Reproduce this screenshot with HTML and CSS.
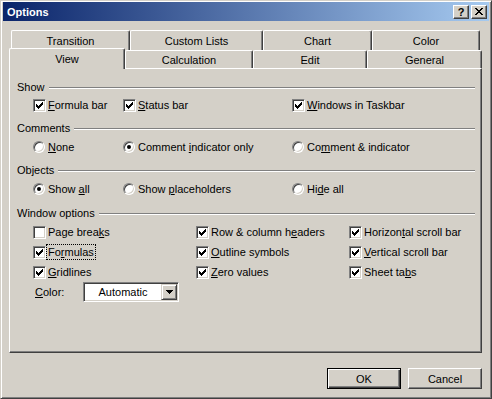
FILE: index.html
```html
<!DOCTYPE html>
<html lang="en">
<head>
    <meta charset="UTF-8">
    <title>Options</title>
    <link rel="stylesheet" href="styles.css">
</head>
<body>
    <div class="window">
        <div class="titlebar">
            <span class="title">Options</span>
            <div class="caption-btns">
                <span class="cap-btn">?</span>
                <span class="cap-btn">
                    <svg width="8" height="7" viewBox="0 0 8 7"><path d="M0 0h2v1H0zM6 0h2v1H6zM1 1h2v1H1zM5 1h2v1H5zM2 2h4v1H2zM3 3h2v1H3zM2 4h4v1H2zM1 5h2v1H1zM5 5h2v1H5zM0 6h2v1H0zM6 6h2v1H6z" fill="#000"/></svg>
                </span>
            </div>
        </div>

        <div class="client">
            <div class="tabs">
                <div class="tab-row back">
                    <div class="tab" style="width:119px">Transition</div>
                    <div class="tab" style="width:133px">Custom Lists</div>
                    <div class="tab" style="width:109px">Chart</div>
                    <div class="tab" style="width:108px">Color</div>
                </div>
                <div class="tab-row front">
                    <div class="tab active" style="width:116px">View</div>
                    <div class="tab" style="width:128px">Calculation</div>
                    <div class="tab" style="width:114px">Edit</div>
                    <div class="tab" style="width:115px">General</div>
                </div>
            </div>

            <div class="panel">
                <!-- Show -->
                <div class="group">
                    <div class="group-title">Show</div>
                    <div class="opts three first">
                        <div class="opt"><span class="check on"><svg viewBox="1 1 11 11"><path d="M3 5h1v3H3zM4 6h1v3H4zM5 7h1v3H5zM6 6h1v3H6zM7 5h1v3H7zM8 4h1v3H8zM9 3h1v3H9z"/></svg></span><span><u>F</u>ormula bar</span></div>
                        <div class="opt"><span class="check on"><svg viewBox="1 1 11 11"><path d="M3 5h1v3H3zM4 6h1v3H4zM5 7h1v3H5zM6 6h1v3H6zM7 5h1v3H7zM8 4h1v3H8zM9 3h1v3H9z"/></svg></span><span><u>S</u>tatus bar</span></div>
                        <div class="opt"><span class="check on"><svg viewBox="1 1 11 11"><path d="M3 5h1v3H3zM4 6h1v3H4zM5 7h1v3H5zM6 6h1v3H6zM7 5h1v3H7zM8 4h1v3H8zM9 3h1v3H9z"/></svg></span><span><u>W</u>indows in Taskbar</span></div>
                    </div>
                </div>

                <!-- Comments -->
                <div class="group">
                    <div class="group-title">Comments</div>
                    <div class="opts three">
                        <div class="opt"><span class="radio"></span><span><u>N</u>one</span></div>
                        <div class="opt"><span class="radio on"></span><span>Comment <u>i</u>ndicator only</span></div>
                        <div class="opt"><span class="radio"></span><span>Co<u>m</u>ment &amp; indicator</span></div>
                    </div>
                </div>

                <!-- Objects -->
                <div class="group">
                    <div class="group-title">Objects</div>
                    <div class="opts three">
                        <div class="opt"><span class="radio on"></span><span>Show <u>a</u>ll</span></div>
                        <div class="opt"><span class="radio"></span><span>Show <u>p</u>laceholders</span></div>
                        <div class="opt"><span class="radio"></span><span>Hi<u>d</u>e all</span></div>
                    </div>
                </div>

                <!-- Window options -->
                <div class="group last">
                    <div class="group-title">Window options</div>
                    <div class="opts win-opts">
                        <div class="opt"><span class="check"></span><span>Page brea<u>k</u>s</span></div>
                        <div class="opt"><span class="check on"><svg viewBox="1 1 11 11"><path d="M3 5h1v3H3zM4 6h1v3H4zM5 7h1v3H5zM6 6h1v3H6zM7 5h1v3H7zM8 4h1v3H8zM9 3h1v3H9z"/></svg></span><span>Row &amp; column h<u>e</u>aders</span></div>
                        <div class="opt"><span class="check on"><svg viewBox="1 1 11 11"><path d="M3 5h1v3H3zM4 6h1v3H4zM5 7h1v3H5zM6 6h1v3H6zM7 5h1v3H7zM8 4h1v3H8zM9 3h1v3H9z"/></svg></span><span>Horizon<u>t</u>al scroll bar</span></div>

                        <div class="opt"><span class="check on"><svg viewBox="1 1 11 11"><path d="M3 5h1v3H3zM4 6h1v3H4zM5 7h1v3H5zM6 6h1v3H6zM7 5h1v3H7zM8 4h1v3H8zM9 3h1v3H9z"/></svg></span><span class="focus">Fo<u>r</u>mulas</span></div>
                        <div class="opt"><span class="check on"><svg viewBox="1 1 11 11"><path d="M3 5h1v3H3zM4 6h1v3H4zM5 7h1v3H5zM6 6h1v3H6zM7 5h1v3H7zM8 4h1v3H8zM9 3h1v3H9z"/></svg></span><span><u>O</u>utline symbols</span></div>
                        <div class="opt"><span class="check on"><svg viewBox="1 1 11 11"><path d="M3 5h1v3H3zM4 6h1v3H4zM5 7h1v3H5zM6 6h1v3H6zM7 5h1v3H7zM8 4h1v3H8zM9 3h1v3H9z"/></svg></span><span><u>V</u>ertical scroll bar</span></div>

                        <div class="opt"><span class="check on"><svg viewBox="1 1 11 11"><path d="M3 5h1v3H3zM4 6h1v3H4zM5 7h1v3H5zM6 6h1v3H6zM7 5h1v3H7zM8 4h1v3H8zM9 3h1v3H9z"/></svg></span><span><u>G</u>ridlines</span></div>
                        <div class="opt"><span class="check on"><svg viewBox="1 1 11 11"><path d="M3 5h1v3H3zM4 6h1v3H4zM5 7h1v3H5zM6 6h1v3H6zM7 5h1v3H7zM8 4h1v3H8zM9 3h1v3H9z"/></svg></span><span><u>Z</u>ero values</span></div>
                        <div class="opt"><span class="check on"><svg viewBox="1 1 11 11"><path d="M3 5h1v3H3zM4 6h1v3H4zM5 7h1v3H5zM6 6h1v3H6zM7 5h1v3H7zM8 4h1v3H8zM9 3h1v3H9z"/></svg></span><span>Sheet ta<u>b</u>s</span></div>
                    </div>
                    <div class="color-row">
                        <span class="color-label"><u>C</u>olor:</span>
                        <div class="combo">
                            <span class="combo-text">Automatic</span>
                            <span class="combo-arrow">
                                <svg width="7" height="4" viewBox="0 0 7 4"><path d="M0 0h7v1H0zM1 1h5v1H1zM2 2h3v1H2zM3 3h1v1H3z" fill="#000"/></svg>
                            </span>
                        </div>
                    </div>
                </div>
            </div>

            <div class="footer">
                <button class="btn default">OK</button>
                <button class="btn">Cancel</button>
            </div>
        </div>
    </div>
</body>
</html>
```

FILE: styles.css
```css
body {
    margin: 0;
    font-family: "Liberation Sans", Arial, sans-serif;
    font-size: 11px;
    color: #000;
    background-color: #d4d0c8;
}
.window {
    width: 492px;
    height: 399px;
    box-sizing: border-box;
    border: 1px solid;
    border-color: #d4d0c8 #404040 #404040 #d4d0c8;
    box-shadow: inset 1px 1px #fff, inset -1px -1px #808080;
    padding: 1px 2px 2px 2px;
    background-color: #d4d0c8;
    display: flex;
    flex-direction: column;
}
.titlebar {
    height: 19px;
    display: flex;
    align-items: center;
    justify-content: space-between;
    padding: 0 2px;
    background: linear-gradient(to right, #0a246a, #a6caf0);
}
.title {
    color: #fff;
    font-weight: bold;
    padding-left: 2px;
}
.caption-btns {
    display: flex;
    gap: 2px;
}
.cap-btn {
    width: 16px;
    height: 14px;
    box-sizing: border-box;
    background-color: #d4d0c8;
    border: 1px solid;
    border-color: #fff #404040 #404040 #fff;
    box-shadow: inset -1px -1px #808080;
    display: flex;
    align-items: center;
    justify-content: center;
    font-weight: bold;
    font-size: 11px;
    line-height: 12px;
}
.client {
    flex: 1;
    padding: 0 7px 0 6px;
    display: flex;
    flex-direction: column;
}
.tabs {
    margin-top: 9px;
}
.tab-row {
    display: flex;
    height: 20px;
}
.tab-row.back {
    padding-left: 2px;
}
.tab-row.front {
    margin-top: -2px;
    align-items: flex-end;
}
.tab {
    box-sizing: border-box;
    height: 20px;
    border: 1px solid;
    border-bottom: none;
    border-color: #fff #404040 #fff #fff;
    box-shadow: inset -1px 0 #808080;
    border-radius: 2px 2px 0 0;
    background-color: #d4d0c8;
    display: flex;
    align-items: center;
    justify-content: center;
}
.front .tab {
    height: 18px;
}
.front .tab.active {
    height: 21px;
    margin-bottom: -1px;
    position: relative;
    z-index: 1;
}
.panel {
    height: 285px;
    box-sizing: border-box;
    border: 1px solid;
    border-color: #fff #404040 #404040 #fff;
    box-shadow: inset -1px -1px #808080;
    padding: 11px 6px 0 7px;
}
.group {
    margin-top: 6px;
}
.group:first-child {
    margin-top: 0;
}
.group.last {
    margin-top: 7px;
}
.group-title {
    display: flex;
    align-items: center;
    height: 14px;
}
.group-title::after {
    content: "";
    flex: 1;
    border-top: 1px solid #808080;
    border-bottom: 1px solid #fff;
    margin: 2px 0 0 4px;
}
.opts {
    display: grid;
    grid-auto-rows: 20px;
    align-items: center;
    margin: 2px 0 0 16px;
}
.opts.first {
    margin-top: 1px;
}
.opts.three {
    grid-template-columns: 90px 169px 1fr;
}
.opts.win-opts {
    grid-template-columns: 163px 153px 1fr;
}
.opt {
    display: flex;
    align-items: center;
    white-space: nowrap;
}
.check {
    flex: none;
    width: 13px;
    height: 13px;
    box-sizing: border-box;
    border: 1px solid;
    border-color: #808080 #fff #fff #808080;
    box-shadow: inset 1px 1px #404040, inset -1px -1px #d4d0c8;
    background-color: #fff;
    margin-right: 2px;
    display: flex;
}
.check svg {
    width: 11px;
    height: 11px;
    fill: #000;
}
.radio {
    flex: none;
    width: 12px;
    height: 12px;
    box-sizing: border-box;
    border-radius: 50%;
    border: 1px solid;
    border-color: #808080 #fff #fff #808080;
    box-shadow: inset 1px 1px #404040, inset -1px -1px #d4d0c8;
    background-color: #fff;
    margin-right: 3px;
    display: flex;
    align-items: center;
    justify-content: center;
}
.radio.on::after {
    content: "";
    width: 4px;
    height: 4px;
    border-radius: 50%;
    background-color: #000;
}
.focus {
    outline: 1px dotted #000;
    padding: 1px;
    margin: -1px;
}
.color-row {
    display: flex;
    align-items: center;
    height: 20px;
    margin-left: 18px;
}
.color-label {
    width: 48px;
}
.combo {
    width: 96px;
    height: 20px;
    box-sizing: border-box;
    border: 1px solid;
    border-color: #808080 #fff #fff #808080;
    box-shadow: inset 1px 1px #404040, inset -1px -1px #d4d0c8;
    background-color: #fff;
    padding: 1px;
    display: flex;
}
.combo-text {
    flex: 1;
    text-align: center;
    line-height: 16px;
}
.combo-arrow {
    width: 16px;
    box-sizing: border-box;
    background-color: #d4d0c8;
    border: 1px solid;
    border-color: #d4d0c8 #404040 #404040 #d4d0c8;
    box-shadow: inset 1px 1px #fff, inset -1px -1px #808080;
    display: flex;
    align-items: center;
    justify-content: center;
}
.footer {
    display: flex;
    justify-content: flex-end;
    gap: 7px;
    margin-top: 15px;
}
.btn {
    width: 74px;
    height: 21px;
    box-sizing: border-box;
    font-family: "Liberation Sans", Arial, sans-serif;
    font-size: 11px;
    color: #000;
    background-color: #d4d0c8;
    border: 1px solid;
    border-color: #fff #404040 #404040 #fff;
    box-shadow: inset -1px -1px #808080;
    padding: 0;
}
.btn.default {
    border-color: #000;
    box-shadow: inset 1px 1px #fff, inset -1px -1px #404040, inset -2px -2px #808080;
}
```
